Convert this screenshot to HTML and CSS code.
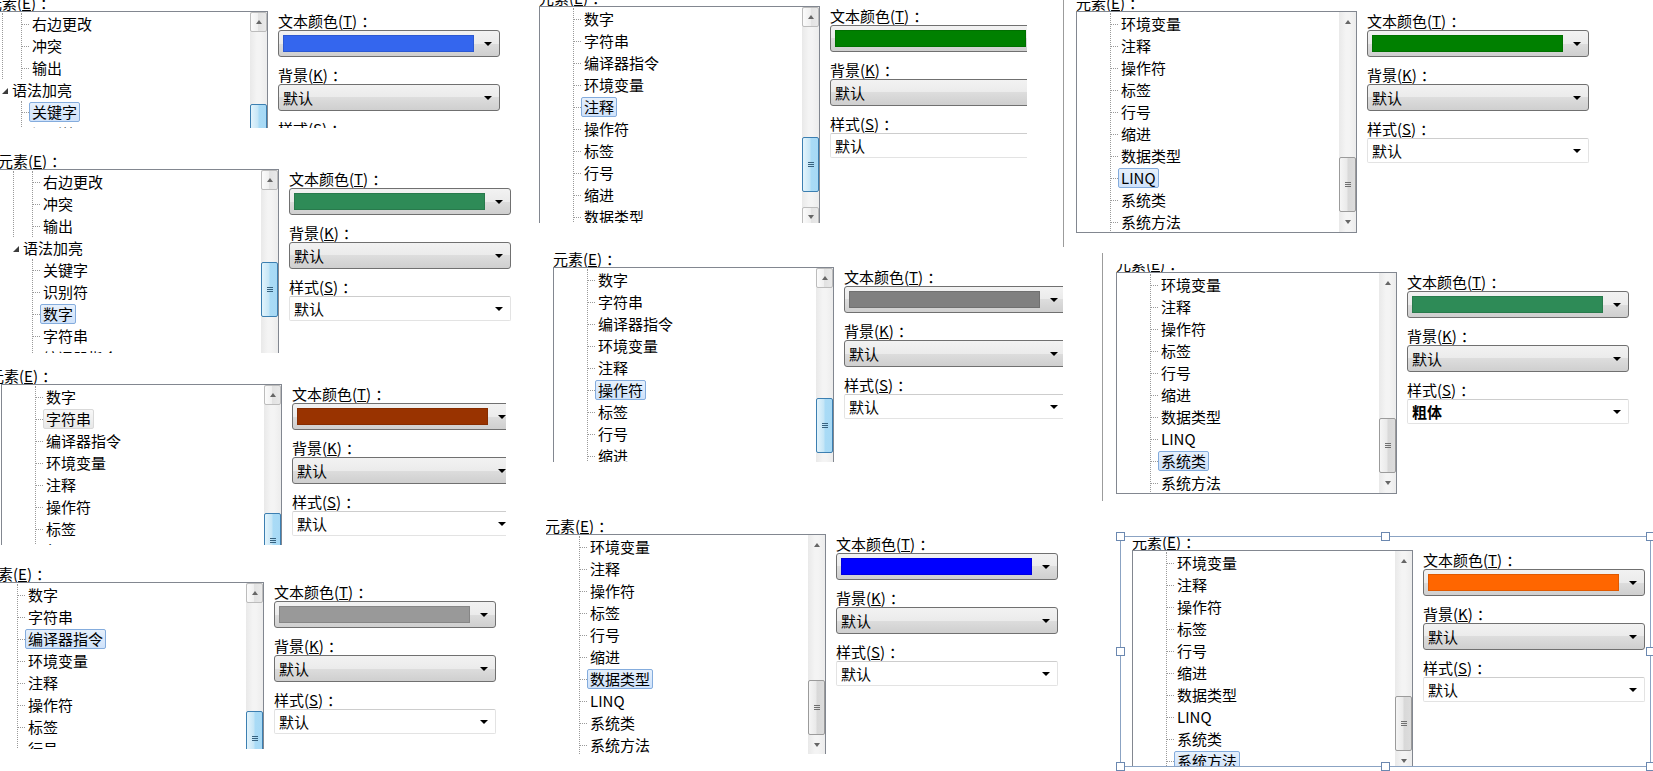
FILE: index.html
```html
<!DOCTYPE html>
<html lang="zh-CN">
<head>
    <meta charset="UTF-8">
    <title>字体和颜色</title>
    <link rel="stylesheet" href="styles.css">
</head>
<body>

    <!-- 1: 关键字 -->
    <div class="shot p1">
        <div class="dlg">
            <div class="cap">元素(<u>E</u>)<i class="cl">：</i></div>
            <div class="body">
                <div class="tree">
                    <div class="list">
                        <div class="root">
                            <div class="kids">
                                <div class="row"><span>右边更改</span></div>
                                <div class="row"><span>冲突</span></div>
                                <div class="row"><span>输出</span></div>
                            </div>
                        </div>
                        <div class="row prow"><i class="tri"></i><span>语法加亮</span></div>
                        <div class="kids">
                            <div class="row"><span class="sel">关键字</span></div>
                            <div class="row"><span>识别符</span></div>
                            <div class="row"><span>数字</span></div>
                            <div class="row"><span>字符串</span></div>
                        </div>
                    </div>
                    <div class="sb hot">
                        <div class="btn up"></div>
                        <div class="track"><div class="thumb" style="margin-top:72px"></div></div>
                        <div class="btn down"></div>
                    </div>
                </div>
                <div class="props">
                    <div class="lbl">文本颜色(<u>T</u>)<i class="cl">：</i></div>
                    <div class="combo"><span class="swatch" style="background:#3466ee"></span><i class="arr"></i></div>
                    <div class="lbl">背景(<u>K</u>)<i class="cl">：</i></div>
                    <div class="combo">默认<i class="arr"></i></div>
                    <div class="lbl">样式(<u>S</u>)<i class="cl">：</i></div>
                    <div class="combo flat">默认<i class="arr"></i></div>
                </div>
            </div>
        </div>
    </div>

    <!-- 2: 数字 -->
    <div class="shot p2">
        <div class="dlg">
            <div class="cap">元素(<u>E</u>)<i class="cl">：</i></div>
            <div class="body">
                <div class="tree">
                    <div class="list">
                        <div class="root">
                            <div class="kids">
                                <div class="row"><span>右边更改</span></div>
                                <div class="row"><span>冲突</span></div>
                                <div class="row"><span>输出</span></div>
                            </div>
                        </div>
                        <div class="row prow"><i class="tri"></i><span>语法加亮</span></div>
                        <div class="kids">
                            <div class="row"><span>关键字</span></div>
                            <div class="row"><span>识别符</span></div>
                            <div class="row"><span class="sel">数字</span></div>
                            <div class="row"><span>字符串</span></div>
                            <div class="row"><span>编译器指令</span></div>
                        </div>
                    </div>
                    <div class="sb hot">
                        <div class="btn up"></div>
                        <div class="track"><div class="thumb" style="margin-top:72px"></div></div>
                        <div class="btn down"></div>
                    </div>
                </div>
                <div class="props">
                    <div class="lbl">文本颜色(<u>T</u>)<i class="cl">：</i></div>
                    <div class="combo"><span class="swatch" style="background:#2e8b57"></span><i class="arr"></i></div>
                    <div class="lbl">背景(<u>K</u>)<i class="cl">：</i></div>
                    <div class="combo">默认<i class="arr"></i></div>
                    <div class="lbl">样式(<u>S</u>)<i class="cl">：</i></div>
                    <div class="combo flat">默认<i class="arr"></i></div>
                </div>
            </div>
        </div>
    </div>

    <!-- 3: 字符串 -->
    <div class="shot p3">
        <div class="dlg">
            <div class="cap">元素(<u>E</u>)<i class="cl">：</i></div>
            <div class="body">
                <div class="tree">
                    <div class="list">
                        <div class="kids">
                            <div class="row"><span>数字</span></div>
                            <div class="row"><span class="sel idle">字符串</span></div>
                            <div class="row"><span>编译器指令</span></div>
                            <div class="row"><span>环境变量</span></div>
                            <div class="row"><span>注释</span></div>
                            <div class="row"><span>操作符</span></div>
                            <div class="row"><span>标签</span></div>
                            <div class="row"><span>行号</span></div>
                            <div class="row"><span>缩进</span></div>
                        </div>
                    </div>
                    <div class="sb hot">
                        <div class="btn up"></div>
                        <div class="track"><div class="thumb" style="margin-top:108px"></div></div>
                        <div class="btn down"></div>
                    </div>
                </div>
                <div class="props">
                    <div class="lbl">文本颜色(<u>T</u>)<i class="cl">：</i></div>
                    <div class="combo"><span class="swatch" style="background:#993300"></span><i class="arr"></i></div>
                    <div class="lbl">背景(<u>K</u>)<i class="cl">：</i></div>
                    <div class="combo">默认<i class="arr"></i></div>
                    <div class="lbl">样式(<u>S</u>)<i class="cl">：</i></div>
                    <div class="combo flat">默认<i class="arr"></i></div>
                </div>
            </div>
        </div>
    </div>

    <!-- 4: 编译器指令 -->
    <div class="shot p4">
        <div class="dlg">
            <div class="cap">元素(<u>E</u>)<i class="cl">：</i></div>
            <div class="body">
                <div class="tree">
                    <div class="list">
                        <div class="kids">
                            <div class="row"><span>数字</span></div>
                            <div class="row"><span>字符串</span></div>
                            <div class="row"><span class="sel">编译器指令</span></div>
                            <div class="row"><span>环境变量</span></div>
                            <div class="row"><span>注释</span></div>
                            <div class="row"><span>操作符</span></div>
                            <div class="row"><span>标签</span></div>
                            <div class="row"><span>行号</span></div>
                            <div class="row"><span>缩进</span></div>
                        </div>
                    </div>
                    <div class="sb hot">
                        <div class="btn up"></div>
                        <div class="track"><div class="thumb" style="margin-top:108px"></div></div>
                        <div class="btn down"></div>
                    </div>
                </div>
                <div class="props">
                    <div class="lbl">文本颜色(<u>T</u>)<i class="cl">：</i></div>
                    <div class="combo"><span class="swatch" style="background:#999999"></span><i class="arr"></i></div>
                    <div class="lbl">背景(<u>K</u>)<i class="cl">：</i></div>
                    <div class="combo">默认<i class="arr"></i></div>
                    <div class="lbl">样式(<u>S</u>)<i class="cl">：</i></div>
                    <div class="combo flat">默认<i class="arr"></i></div>
                </div>
            </div>
        </div>
    </div>

    <!-- 5: 注释 -->
    <div class="shot p5">
        <div class="dlg">
            <div class="cap">元素(<u>E</u>)<i class="cl">：</i></div>
            <div class="body">
                <div class="tree">
                    <div class="list">
                        <div class="kids">
                            <div class="row"><span>数字</span></div>
                            <div class="row"><span>字符串</span></div>
                            <div class="row"><span>编译器指令</span></div>
                            <div class="row"><span>环境变量</span></div>
                            <div class="row"><span class="sel">注释</span></div>
                            <div class="row"><span>操作符</span></div>
                            <div class="row"><span>标签</span></div>
                            <div class="row"><span>行号</span></div>
                            <div class="row"><span>缩进</span></div>
                            <div class="row"><span>数据类型</span></div>
                        </div>
                    </div>
                    <div class="sb hot">
                        <div class="btn up"></div>
                        <div class="track"><div class="thumb" style="margin-top:110px"></div></div>
                        <div class="btn down"></div>
                    </div>
                </div>
                <div class="props">
                    <div class="lbl">文本颜色(<u>T</u>)<i class="cl">：</i></div>
                    <div class="combo"><span class="swatch" style="background:#008000"></span><i class="arr"></i></div>
                    <div class="lbl">背景(<u>K</u>)<i class="cl">：</i></div>
                    <div class="combo">默认<i class="arr"></i></div>
                    <div class="lbl">样式(<u>S</u>)<i class="cl">：</i></div>
                    <div class="combo flat">默认<i class="arr"></i></div>
                </div>
            </div>
        </div>
    </div>

    <!-- 6: 操作符 -->
    <div class="shot p6">
        <div class="dlg">
            <div class="cap">元素(<u>E</u>)<i class="cl">：</i></div>
            <div class="body">
                <div class="tree">
                    <div class="list">
                        <div class="kids">
                            <div class="row"><span>数字</span></div>
                            <div class="row"><span>字符串</span></div>
                            <div class="row"><span>编译器指令</span></div>
                            <div class="row"><span>环境变量</span></div>
                            <div class="row"><span>注释</span></div>
                            <div class="row"><span class="sel">操作符</span></div>
                            <div class="row"><span>标签</span></div>
                            <div class="row"><span>行号</span></div>
                            <div class="row"><span>缩进</span></div>
                            <div class="row"><span>数据类型</span></div>
                        </div>
                    </div>
                    <div class="sb hot">
                        <div class="btn up"></div>
                        <div class="track"><div class="thumb" style="margin-top:110px"></div></div>
                        <div class="btn down"></div>
                    </div>
                </div>
                <div class="props">
                    <div class="lbl">文本颜色(<u>T</u>)<i class="cl">：</i></div>
                    <div class="combo"><span class="swatch" style="background:#808080"></span><i class="arr"></i></div>
                    <div class="lbl">背景(<u>K</u>)<i class="cl">：</i></div>
                    <div class="combo">默认<i class="arr"></i></div>
                    <div class="lbl">样式(<u>S</u>)<i class="cl">：</i></div>
                    <div class="combo flat">默认<i class="arr"></i></div>
                </div>
            </div>
        </div>
    </div>

    <!-- 7: 数据类型 -->
    <div class="shot p7">
        <div class="dlg">
            <div class="cap">元素(<u>E</u>)<i class="cl">：</i></div>
            <div class="body">
                <div class="tree">
                    <div class="list">
                        <div class="kids">
                            <div class="row"><span>环境变量</span></div>
                            <div class="row"><span>注释</span></div>
                            <div class="row"><span>操作符</span></div>
                            <div class="row"><span>标签</span></div>
                            <div class="row"><span>行号</span></div>
                            <div class="row"><span>缩进</span></div>
                            <div class="row"><span class="sel">数据类型</span></div>
                            <div class="row"><span>LINQ</span></div>
                            <div class="row"><span>系统类</span></div>
                            <div class="row"><span>系统方法</span></div>
                        </div>
                    </div>
                    <div class="sb">
                        <div class="btn up"></div>
                        <div class="track"><div class="thumb end"></div></div>
                        <div class="btn down"></div>
                    </div>
                </div>
                <div class="props">
                    <div class="lbl">文本颜色(<u>T</u>)<i class="cl">：</i></div>
                    <div class="combo"><span class="swatch" style="background:#0000ff"></span><i class="arr"></i></div>
                    <div class="lbl">背景(<u>K</u>)<i class="cl">：</i></div>
                    <div class="combo">默认<i class="arr"></i></div>
                    <div class="lbl">样式(<u>S</u>)<i class="cl">：</i></div>
                    <div class="combo flat">默认<i class="arr"></i></div>
                </div>
            </div>
        </div>
    </div>

    <!-- 8: LINQ -->
    <div class="vline v8"></div>
    <div class="shot p8">
        <div class="dlg">
            <div class="cap">元素(<u>E</u>)<i class="cl">：</i></div>
            <div class="body">
                <div class="tree">
                    <div class="list">
                        <div class="kids">
                            <div class="row"><span>环境变量</span></div>
                            <div class="row"><span>注释</span></div>
                            <div class="row"><span>操作符</span></div>
                            <div class="row"><span>标签</span></div>
                            <div class="row"><span>行号</span></div>
                            <div class="row"><span>缩进</span></div>
                            <div class="row"><span>数据类型</span></div>
                            <div class="row"><span class="sel">LINQ</span></div>
                            <div class="row"><span>系统类</span></div>
                            <div class="row"><span>系统方法</span></div>
                        </div>
                    </div>
                    <div class="sb">
                        <div class="btn up"></div>
                        <div class="track"><div class="thumb end"></div></div>
                        <div class="btn down"></div>
                    </div>
                </div>
                <div class="props">
                    <div class="lbl">文本颜色(<u>T</u>)<i class="cl">：</i></div>
                    <div class="combo"><span class="swatch" style="background:#008000"></span><i class="arr"></i></div>
                    <div class="lbl">背景(<u>K</u>)<i class="cl">：</i></div>
                    <div class="combo">默认<i class="arr"></i></div>
                    <div class="lbl">样式(<u>S</u>)<i class="cl">：</i></div>
                    <div class="combo flat">默认<i class="arr"></i></div>
                </div>
            </div>
        </div>
    </div>

    <!-- 9: 系统类 -->
    <div class="vline v9"></div>
    <div class="shot p9">
        <div class="dlg">
            <div class="cap">元素(<u>E</u>)<i class="cl">：</i></div>
            <div class="body">
                <div class="tree">
                    <div class="list">
                        <div class="kids">
                            <div class="row"><span>环境变量</span></div>
                            <div class="row"><span>注释</span></div>
                            <div class="row"><span>操作符</span></div>
                            <div class="row"><span>标签</span></div>
                            <div class="row"><span>行号</span></div>
                            <div class="row"><span>缩进</span></div>
                            <div class="row"><span>数据类型</span></div>
                            <div class="row"><span>LINQ</span></div>
                            <div class="row"><span class="sel">系统类</span></div>
                            <div class="row"><span>系统方法</span></div>
                        </div>
                    </div>
                    <div class="sb">
                        <div class="btn up"></div>
                        <div class="track"><div class="thumb end"></div></div>
                        <div class="btn down"></div>
                    </div>
                </div>
                <div class="props">
                    <div class="lbl">文本颜色(<u>T</u>)<i class="cl">：</i></div>
                    <div class="combo"><span class="swatch" style="background:#2e8b57"></span><i class="arr"></i></div>
                    <div class="lbl">背景(<u>K</u>)<i class="cl">：</i></div>
                    <div class="combo">默认<i class="arr"></i></div>
                    <div class="lbl">样式(<u>S</u>)<i class="cl">：</i></div>
                    <div class="combo flat"><b>粗体</b><i class="arr"></i></div>
                </div>
            </div>
        </div>
    </div>

    <!-- 10: 系统方法 (设计器里被选中的控件) -->
    <div class="selframe">
        <i class="h tl"></i><i class="h tc"></i><i class="h tr"></i>
        <i class="h ml"></i><i class="h mr"></i>
        <i class="h bl"></i><i class="h bc"></i><i class="h br"></i>
        <div class="shot p10">
            <div class="dlg">
                <div class="cap">元素(<u>E</u>)<i class="cl">：</i></div>
                <div class="body">
                    <div class="tree">
                        <div class="list">
                            <div class="kids">
                                <div class="row"><span>环境变量</span></div>
                                <div class="row"><span>注释</span></div>
                                <div class="row"><span>操作符</span></div>
                                <div class="row"><span>标签</span></div>
                                <div class="row"><span>行号</span></div>
                                <div class="row"><span>缩进</span></div>
                                <div class="row"><span>数据类型</span></div>
                                <div class="row"><span>LINQ</span></div>
                                <div class="row"><span>系统类</span></div>
                                <div class="row"><span class="sel">系统方法</span></div>
                            </div>
                        </div>
                        <div class="sb">
                            <div class="btn up"></div>
                            <div class="track"><div class="thumb end"></div></div>
                            <div class="btn down"></div>
                        </div>
                    </div>
                    <div class="props">
                        <div class="lbl">文本颜色(<u>T</u>)<i class="cl">：</i></div>
                        <div class="combo"><span class="swatch" style="background:#ff6600"></span><i class="arr"></i></div>
                        <div class="lbl">背景(<u>K</u>)<i class="cl">：</i></div>
                        <div class="combo">默认<i class="arr"></i></div>
                        <div class="lbl">样式(<u>S</u>)<i class="cl">：</i></div>
                        <div class="combo flat">默认<i class="arr"></i></div>
                    </div>
                </div>
            </div>
        </div>
    </div>

</body>
</html>
```

FILE: styles.css
```css
body {
    margin: 0;
    width: 1653px;
    height: 771px;
    position: relative;
    overflow: hidden;
    background: #fff;
    font-family: "Noto Sans CJK SC", "Noto Sans", sans-serif;
    font-size: 15px;
    color: #000;
}
u {
    text-underline-offset: 1px;
}
/* 全角冒号在窗口里是居中的 */
.cl {
    font-style: normal;
    padding-left: 4px;
}

/* each cropped screenshot sits on the collage at its own place */
.shot {
    position: absolute;
    overflow: hidden;
    background: #fff;
}
.p1 { left: 0; top: 0; width: 510px; height: 128px; }
.p2 { left: 0; top: 150px; width: 520px; height: 203px; }
.p3 { left: 0; top: 364px; width: 506px; height: 181px; }
.p4 { left: 0; top: 562px; width: 510px; height: 187px; }
.p5 { left: 530px; top: 0; width: 497px; height: 223px; }
.p6 { left: 548px; top: 252px; width: 515px; height: 210px; }
.p7 { left: 546px; top: 516px; width: 514px; height: 238px; }
.p8 { left: 1066px; top: 0; width: 534px; height: 247px; }
.p9 { left: 1105px; top: 264px; width: 535px; height: 236px; }
.p10 { left: 0; top: 0; width: 529px; height: 229px; }

.p1 .dlg { margin: -5px 0 0 -13px; }
.p2 .dlg { margin: 3px 0 0 -2px; }
.p3 .dlg { margin: 4px 0 0 1px; }
.p3 .cap { margin-left: -12px; }
.p4 .dlg { margin: 4px 0 0 -17px; }
.p5 .dlg { margin: -10px 0 0 9px; }
.p6 .dlg { margin: -1px 0 0 5px; }
.p7 .dlg { margin: 2px 0 0 -1px; }
.p8 .dlg { margin: -5px 0 0 10px; }
.p9 .dlg { margin: -8px 0 0 11px; }
.p10 .dlg { margin: -3px 0 0 11px; }

.vline {
    position: absolute;
    width: 1px;
    background: #9c9c9c;
}
.v8 { left: 1063px; top: 0; height: 247px; }
.v9 { left: 1102px; top: 253px; height: 248px; }

/* selection frame of the designer */
.selframe {
    position: absolute;
    left: 1120px;
    top: 536px;
    width: 531px;
    height: 231px;
    box-sizing: border-box;
    border: 1px solid #8ba3c3;
}
.selframe .h {
    position: absolute;
    width: 7px;
    height: 7px;
    background: #fff;
    border: 1px solid #6b88b0;
    z-index: 2;
}
.h.tl { left: -5px; top: -5px; }
.h.tc { left: 260px; top: -5px; }
.h.tr { right: -5px; top: -5px; }
.h.ml { left: -5px; top: 110px; }
.h.mr { right: -5px; top: 110px; }
.h.bl { left: -5px; bottom: -5px; }
.h.bc { left: 260px; bottom: -5px; }
.h.br { right: -5px; bottom: -5px; }

/* dialog */
.dlg {
    width: 513px;
}
.cap {
    line-height: 16px;
    height: 16px;
    white-space: nowrap;
}
.body {
    display: flex;
    gap: 10px;
    align-items: flex-start;
}

/* tree view */
.tree {
    width: 281px;
    height: 222px;
    box-sizing: border-box;
    border: 1px solid #828790;
    display: flex;
    background: #fff;
}
.list {
    flex: 1;
    padding-top: 1px;
    overflow: hidden;
}
.root {
    margin-left: 14px;
    border-left: 1px dotted #9a9a9a;
}
.kids {
    margin-left: 33px;
    border-left: 1px dotted #9a9a9a;
}
.root .kids {
    margin-left: 18px;
}
.row {
    height: 22px;
    display: flex;
    align-items: center;
    white-space: nowrap;
}
.kids .row::before {
    content: "";
    width: 7px;
    border-top: 1px dotted #9a9a9a;
}
.row span {
    line-height: 18px;
    padding: 0 2px;
    border: 1px solid transparent;
    border-radius: 2px;
}
.row span.sel {
    background: linear-gradient(#e6f0fc, #cfe2fa);
    border-color: #84acdd;
}
.row span.sel.idle {
    background: linear-gradient(#f8f8f8, #e8e8e8);
    border-color: #d9d9d9;
}
.prow {
    padding-left: 14px;
}
.tri {
    width: 0;
    height: 0;
    border-left: 6px solid transparent;
    border-bottom: 6px solid #3c3c3c;
    margin: 2px 1px 0 0;
}

/* scroll bar */
.sb {
    width: 17px;
    flex: none;
    display: flex;
    flex-direction: column;
    background: linear-gradient(90deg, #e9e9e9, #f4f4f4 40%, #f4f4f4 60%, #ececec);
}
.btn {
    height: 20px;
    flex: none;
    box-sizing: border-box;
    display: flex;
    align-items: center;
    justify-content: center;
}
.hot .btn {
    border: 1px solid #bcbcbc;
    border-radius: 2px;
    background: linear-gradient(90deg, #fbfbfb, #efefef 50%, #e2e2e2 50%, #e9e9e9);
}
.btn.up::before {
    content: "";
    border-left: 3px solid transparent;
    border-right: 3px solid transparent;
    border-bottom: 4px solid #666;
}
.btn.down::before {
    content: "";
    border-left: 3px solid transparent;
    border-right: 3px solid transparent;
    border-top: 4px solid #666;
}
.track {
    flex: 1;
    display: flex;
    flex-direction: column;
}
.thumb {
    height: 55px;
    flex: none;
    box-sizing: border-box;
    border: 1px solid #9b9b9b;
    border-radius: 2px;
    background: linear-gradient(90deg, #f5f5f5, #e9e9e9 48%, #d8d8d8 52%, #dcdcdc);
    display: flex;
    align-items: center;
    justify-content: center;
}
.thumb.end {
    margin-top: auto;
}
.thumb::before {
    content: "";
    width: 6px;
    height: 3px;
    border-top: 1px solid #707070;
    border-bottom: 1px solid #707070;
    background: linear-gradient(#707070, #707070) 0 1px / 100% 1px no-repeat;
}
.hot .thumb {
    border-color: #3c7fb1;
    background: linear-gradient(90deg, #e3f4fc, #c4e5f6 48%, #a9dbf6 52%, #a7d9f5);
}
.hot .thumb::before {
    border-color: #37627f;
    background-image: linear-gradient(#37627f, #37627f);
}

/* colour / background / style */
.props {
    width: 222px;
    flex: none;
}
.lbl {
    line-height: 16px;
    margin: 10px 0 1px;
    white-space: nowrap;
}
.lbl:first-child {
    margin-top: 2px;
}
.combo {
    height: 27px;
    box-sizing: border-box;
    border: 1px solid #707070;
    border-radius: 3px;
    background: linear-gradient(#f2f2f2, #ebebeb 50%, #dddddd 50%, #cfcfcf);
    display: flex;
    align-items: center;
    padding: 0 7px 0 4px;
    white-space: nowrap;
}
.combo.flat {
    height: 25px;
    background: #fff;
    border-color: #e3e3e3;
    border-top-color: #cdcdcd;
    border-radius: 2px;
}
.swatch {
    width: 191px;
    height: 17px;
    flex: none;
    box-sizing: border-box;
    border: 1px solid rgba(0, 0, 0, 0.12);
}
.arr {
    margin-left: auto;
    border-left: 4px solid transparent;
    border-right: 4px solid transparent;
    border-top: 4px solid #000;
}
```
